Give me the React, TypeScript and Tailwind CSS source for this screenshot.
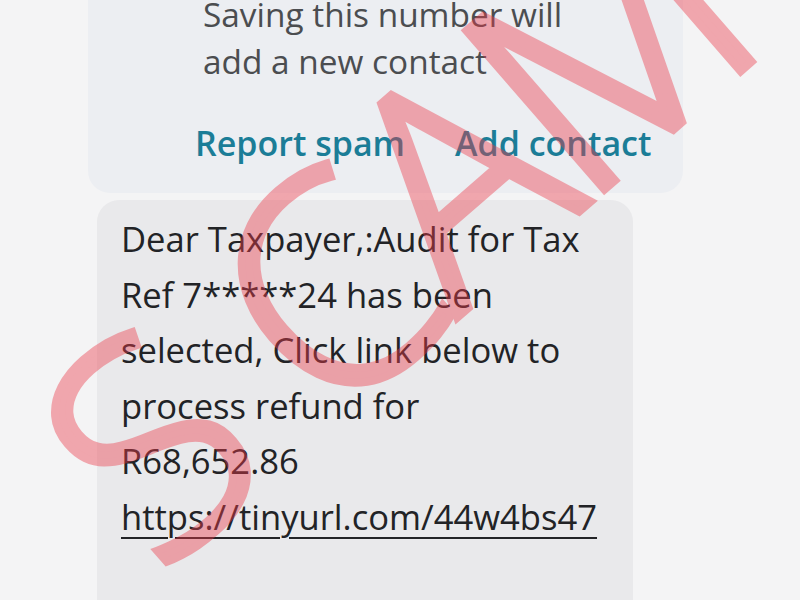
import { ReactNode } from "react";

// Text of the incoming SMS, one entry per rendered line
const messageLines = [
  "Dear Taxpayer,:Audit for Tax",
  "Ref 7*****24 has been",
  "selected, Click link below to",
  "process refund for",
  "R68,652.86",
];

const link = "https://tinyurl.com/44w4bs47";

function UnknownSenderCard() {
  return (
    <div className="ml-[88px] w-[595px] rounded-b-[22px] bg-[#eceef2] pb-[30px]">
      <p className="-mt-[9px] pl-[115px] text-[33.4px] leading-[47px] text-[#4b4d50]">
        Saving this number will
        <br />
        add a new contact
      </p>
      <div className="mt-[38px] flex gap-[50px] pl-[107px] text-[34px] font-semibold leading-[40px] text-[#1b7d97]">
        <button>Report spam</button>
        <button>Add contact</button>
      </div>
    </div>
  );
}

function MessageBubble({ children }: { children: ReactNode }) {
  return (
    <div className="ml-[97px] mt-[7px] h-[420px] w-[536px] rounded-t-[22px] bg-[#e9e9eb] pl-[24px] pt-[11px] text-[34.6px] leading-[55.6px] text-[#222326]">
      {children}
    </div>
  );
}

export default function App() {
  return (
    <div className="relative h-[600px] w-[800px] overflow-hidden bg-[#f4f4f5] font-['Open_Sans',sans-serif]">
      <UnknownSenderCard />
      <MessageBubble>
        {messageLines.map((line) => (
          <div key={line}>{line}</div>
        ))}
        <a
          href={link}
          className="underline decoration-2 underline-offset-[7px]"
        >
          {link}
        </a>
      </MessageBubble>

      {/* Watermark stamped across the screenshot; opacity on the whole
          layer so the outline and fill don't double up */}
      <div className="pointer-events-none absolute left-[387px] top-[227px] -translate-x-1/2 -translate-y-1/2 rotate-[-41deg] whitespace-nowrap font-['Open_Sans',sans-serif] text-[295px] font-light leading-none tracking-[-0.04em] text-[#ec3c4b] opacity-[0.42] [-webkit-text-stroke:8px_#ec3c4b]">
        <span className="mr-[75px]">S</span>CAM
      </div>
    </div>
  );
}
